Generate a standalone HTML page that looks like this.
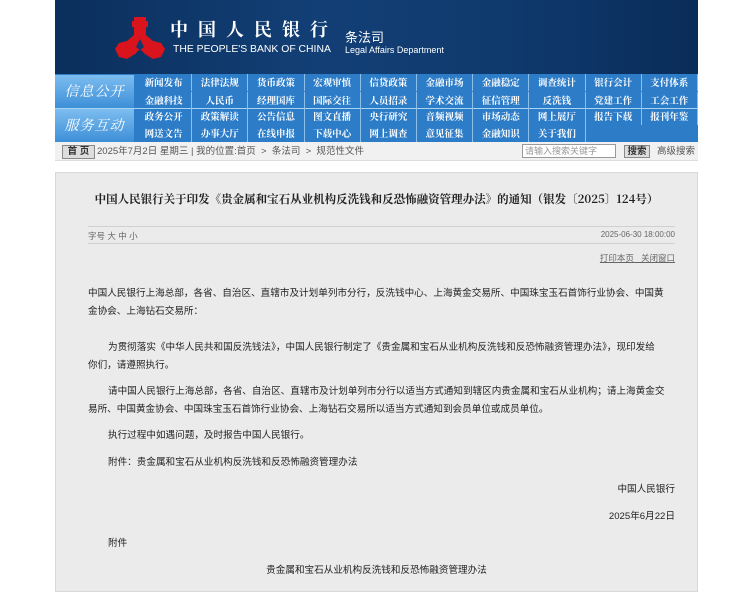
<!DOCTYPE html>
<html><head><meta charset="utf-8"><style>
*{margin:0;padding:0;box-sizing:border-box}
body{width:740px;height:578px;overflow:hidden;background:#fff;font-family:"Liberation Sans","Noto Sans CJK SC",sans-serif;font-size:12px;color:#222;position:relative}
.hdr{position:absolute;left:55px;top:0;width:643px;height:74px;background:linear-gradient(90deg,#0b2f5c 0%,#123f76 40%,#0f3a6e 70%,#0a2c58 100%)}
.nav{position:absolute;left:55px;top:74px;width:643px;height:68px;background:#2c7cc8}
.lab{position:absolute;left:0;width:79px;height:33px;background:linear-gradient(180deg,#7dbdf0,#3d8fd8);color:#fff;font-style:italic;font-size:14px;font-family:"Noto Serif CJK SC",serif;text-align:center;line-height:33px;letter-spacing:1px}
.row{position:absolute;left:81px;height:17px;width:562px;display:flex}
.row span{width:56.2px;text-align:center;color:#fff;font-size:9.5px;font-weight:bold;line-height:17px;border-right:1px solid #8cc0ea;font-family:"Noto Serif CJK SC",serif}
.bc{position:absolute;left:55px;top:142px;width:643px;height:19px;background:#f1f1f1;border-bottom:1px solid #ddd;font-size:9.5px;color:#555;line-height:19px}
.box{position:absolute;left:55px;top:172px;width:643px;height:420px;background:#ebebeb;border:1px solid #d8d8d8}
.t{position:absolute;white-space:nowrap;font-size:9.6px;color:#222}
</style></head><body>
<div class="hdr">
<svg style="position:absolute;left:60px;top:17px" width="50" height="43" viewBox="0 0 50 43">
<g fill="#d9141c">
<rect x="19" y="0" width="12" height="5"/><rect x="17" y="4" width="16" height="6"/><rect x="19" y="9" width="12" height="10"/>
<polygon points="19,18 31,18 38,24 46,26 50,32 46,40 38,42 30,37 25,32 20,37 12,42 4,40 0,32 4,26 12,24"/>
</g>
<polygon points="25,22 29,30 25,33 21,30" fill="#0f3a6e"/>
</svg>
<div style="position:absolute;left:115px;top:18px;color:#fff;font-size:18px;line-height:22px;font-family:'Noto Serif CJK SC',serif;font-weight:bold;letter-spacing:10px;white-space:nowrap">中国人民银行</div>
<div style="position:absolute;left:118px;top:44px;color:#fff;font-size:10.4px;white-space:nowrap">THE PEOPLE'S BANK OF CHINA</div>
<div style="position:absolute;left:290px;top:27px;color:#fff;font-size:13px;white-space:nowrap">条法司</div>
<div style="position:absolute;left:290px;top:45px;color:#fff;font-size:9px;white-space:nowrap">Legal Affairs Department</div>
</div>
<div class="nav">
<div class="lab" style="top:1px">信息公开</div>
<div class="lab" style="top:35px">服务互动</div>
<div style="position:absolute;left:0;top:34px;width:643px;height:1px;background:#a8d4f4"></div>
<div class="row" style="top:0"><span>新闻发布</span><span>法律法规</span><span>货币政策</span><span>宏观审慎</span><span>信贷政策</span><span>金融市场</span><span>金融稳定</span><span>调查统计</span><span>银行会计</span><span>支付体系</span></div>
<div class="row" style="top:18px"><span>金融科技</span><span>人民币</span><span>经理国库</span><span>国际交往</span><span>人员招录</span><span>学术交流</span><span>征信管理</span><span>反洗钱</span><span>党建工作</span><span>工会工作</span></div>
<div class="row" style="top:34px"><span>政务公开</span><span>政策解读</span><span>公告信息</span><span>图文直播</span><span>央行研究</span><span>音频视频</span><span>市场动态</span><span>网上展厅</span><span>报告下载</span><span>报刊年鉴</span></div>
<div class="row" style="top:51px"><span>网送文告</span><span>办事大厅</span><span>在线申报</span><span>下载中心</span><span>网上调查</span><span>意见征集</span><span>金融知识</span><span>关于我们</span><span style="border:0"></span><span style="border:0"></span></div>
</div>
<div class="bc">
<span style="position:absolute;left:7px;top:3px;width:33px;height:14px;border:1px solid #888;background:#ddd;line-height:12px;text-align:center;font-weight:bold;color:#333">首 页</span>
<span style="position:absolute;left:42px;white-space:nowrap">2025年7月2日 星期三 | 我的位置:首页 &nbsp;&gt;&nbsp; 条法司 &nbsp;&gt;&nbsp; 规范性文件</span>
<span style="position:absolute;left:467px;top:2px;width:94px;height:14px;background:#fff;border:1px solid #999;line-height:12px;color:#999;font-size:9px;padding-left:2px;white-space:nowrap">请输入搜索关键字</span>
<span style="position:absolute;left:569px;top:3px;width:26px;height:13px;border:1px solid #888;background:#ddd;line-height:11px;text-align:center;font-weight:bold;color:#333">搜索</span>
<span style="position:absolute;left:602px;white-space:nowrap">高级搜索</span>
</div>
<div class="box">
<div class="t" style="left:0;width:641px;text-align:center;top:18px;font-weight:bold;font-size:11.5px;font-family:'Noto Serif CJK SC',serif">中国人民银行关于印发《贵金属和宝石从业机构反洗钱和反恐怖融资管理办法》的通知（银发〔2025〕124号）</div>
<div style="position:absolute;left:32px;top:53px;width:587px;height:1px;background:#d0d0d0"></div>
<div style="position:absolute;left:32px;top:70px;width:587px;height:1px;background:#d0d0d0"></div>
<div class="t" style="left:32px;top:57px;font-size:8.5px;color:#666">字号 大 中 小</div>
<div class="t" style="right:22px;top:57px;font-size:8px;color:#666">2025-06-30 18:00:00</div>
<div class="t" style="right:22px;top:79px;font-size:8.5px;color:#666;text-decoration:underline">打印本页 &nbsp; 关闭窗口</div>
<div class="t" style="left:32px;top:112px">中国人民银行上海总部，各省、自治区、直辖市及计划单列市分行，反洗钱中心、上海黄金交易所、中国珠宝玉石首饰行业协会、中国黄</div>
<div class="t" style="left:32px;top:130px">金协会、上海钻石交易所：</div>
<div class="t" style="left:52px;top:166px">为贯彻落实《中华人民共和国反洗钱法》，中国人民银行制定了《贵金属和宝石从业机构反洗钱和反恐怖融资管理办法》，现印发给</div>
<div class="t" style="left:32px;top:184px">你们，请遵照执行。</div>
<div class="t" style="left:52px;top:210px">请中国人民银行上海总部，各省、自治区、直辖市及计划单列市分行以适当方式通知到辖区内贵金属和宝石从业机构；请上海黄金交</div>
<div class="t" style="left:32px;top:228px">易所、中国黄金协会、中国珠宝玉石首饰行业协会、上海钻石交易所以适当方式通知到会员单位或成员单位。</div>
<div class="t" style="left:52px;top:254px">执行过程中如遇问题，及时报告中国人民银行。</div>
<div class="t" style="left:52px;top:281px">附件：贵金属和宝石从业机构反洗钱和反恐怖融资管理办法</div>
<div class="t" style="right:22px;top:308px">中国人民银行</div>
<div class="t" style="right:22px;top:335px">2025年6月22日</div>
<div class="t" style="left:52px;top:362px">附件</div>
<div class="t" style="left:0;width:641px;text-align:center;top:389px">贵金属和宝石从业机构反洗钱和反恐怖融资管理办法</div>
</div>
</body></html>
